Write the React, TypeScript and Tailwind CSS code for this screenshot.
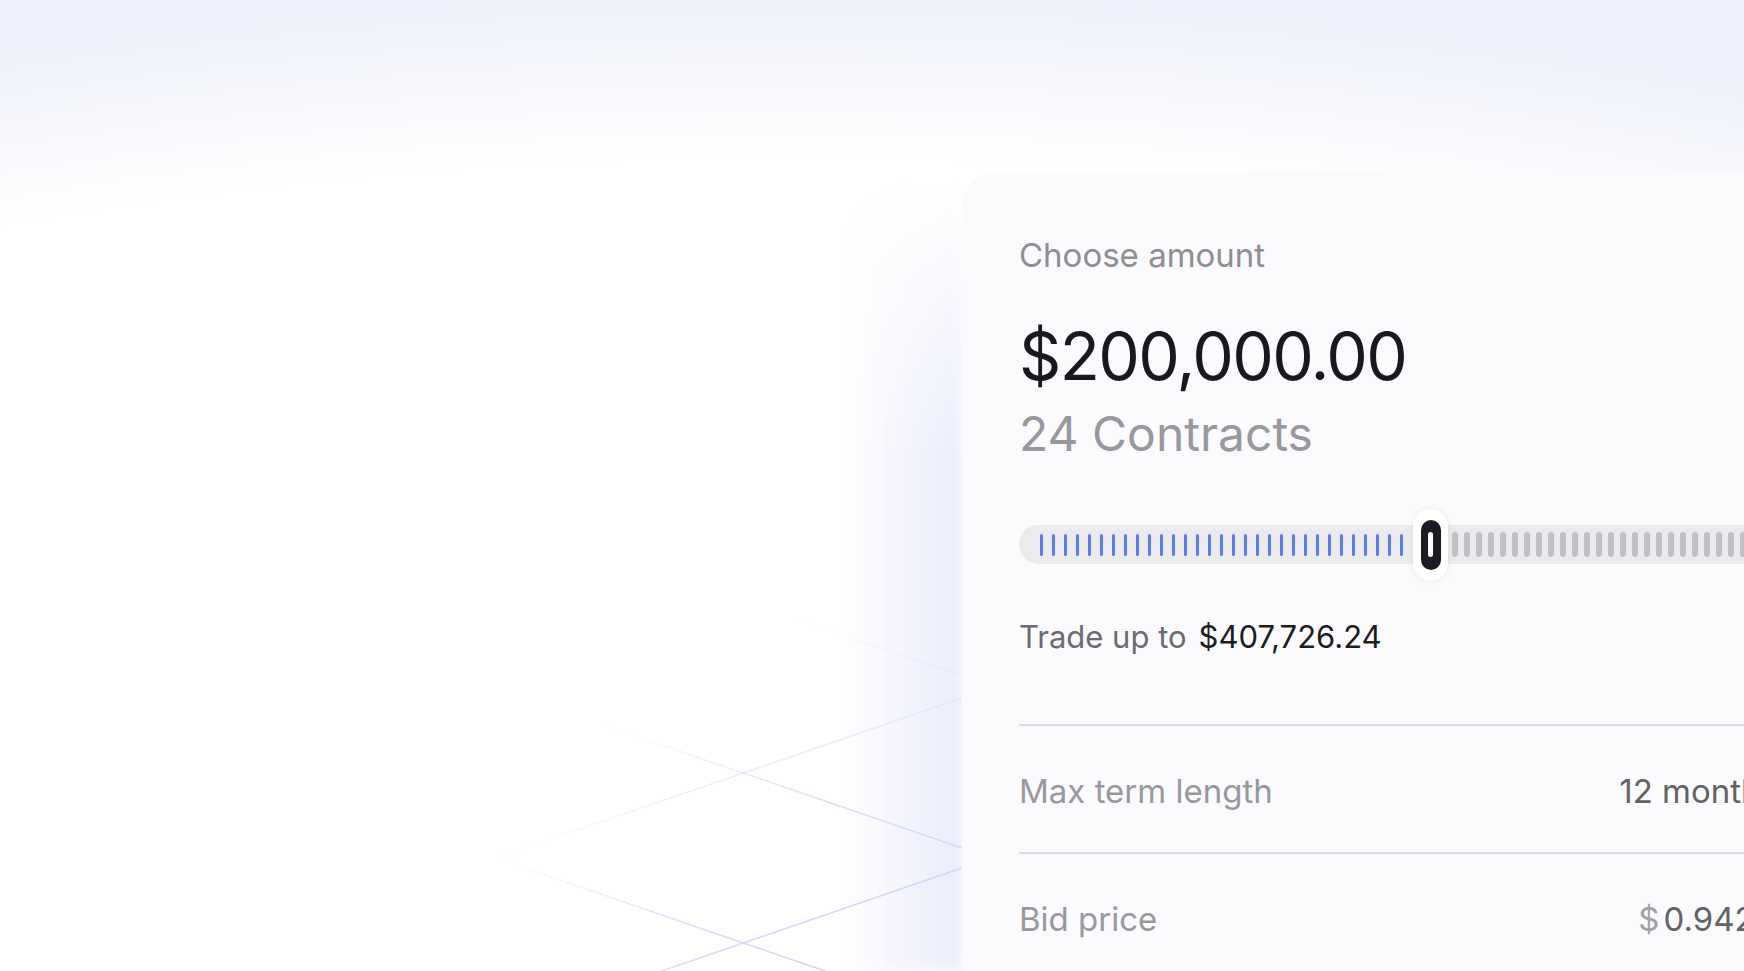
import React from "react";

const blueTicks = Array.from({ length: 31 });
const grayTicks = Array.from({ length: 26 });

// lattice lines behind the card, slope ~0.343
function Lattice() {
  return (
    <svg
      className="absolute left-0 top-0"
      width="962"
      height="971"
      viewBox="0 0 962 971"
      fill="none"
    >
      <defs>
        <radialGradient id="fade" gradientUnits="userSpaceOnUse" cx="920" cy="1080" r="480">
          <stop offset="0" stopColor="#cbc9f7" stopOpacity="1" />
          <stop offset="0.6" stopColor="#d2d0f8" stopOpacity="0.7" />
          <stop offset="1" stopColor="#e0defb" stopOpacity="0" />
        </radialGradient>
      </defs>
      <g stroke="url(#fade)" strokeWidth="1.6">
        <line x1="0" y1="346" x2="962" y2="676" />
        <line x1="0" y1="518" x2="962" y2="848" />
        <line x1="0" y1="688" x2="962" y2="1018" />
        <line x1="0" y1="1028" x2="962" y2="698" />
        <line x1="0" y1="1198" x2="962" y2="868" />
      </g>
    </svg>
  );
}

function Slider() {
  return (
    <div className="flex h-[39px] items-center rounded-full bg-[#ebebee] pl-[21px]">
      <div className="flex gap-[9px]">
        {blueTicks.map((_, i) => (
          <div key={i} className="h-[22px] w-[3px] rounded-full bg-[#5a7ef0]" />
        ))}
      </div>
      <div className="ml-[10px] flex h-[72px] w-[35px] shrink-0 items-center justify-center rounded-full bg-white shadow-[0_0_6px_rgba(0,0,0,0.08)]">
        <div className="flex h-[50px] w-[20px] items-center justify-center rounded-full bg-[#1b1c21]">
          <div className="h-[25px] w-[5px] rounded-full bg-white" />
        </div>
      </div>
      <div className="ml-[4px] flex gap-[6px]">
        {grayTicks.map((_, i) => (
          <div key={i} className="h-[25px] w-[6px] rounded-full bg-[#bfc0c5]" />
        ))}
      </div>
    </div>
  );
}

export default function App() {
  return (
    <div className="relative h-[971px] w-full overflow-hidden bg-[radial-gradient(150%_125%_at_45%_120%,#ffffff_83%,#eef1fb_97%)] font-['Inter','Liberation_Sans',sans-serif]">
      {/* lavender glow left of the card */}
      <div className="absolute left-[840px] top-[180px] h-[791px] w-[123px] rounded-tl-[80px] bg-gradient-to-r from-[#ffffff00] via-[#f4f5fd] to-[#eaecfb] blur-[6px] [mask-image:linear-gradient(to_bottom,transparent,black_280px)]" />
      <Lattice />
      <div className="relative flex pl-[962px] pt-[173px]">
        <div className="h-[798px] w-[870px] shrink-0 rounded-tl-[32px] bg-[#fbfbfd] px-[57px] pt-[66px]">
          <p className="text-[33px] leading-none text-[#8e8e93]">Choose amount</p>
          <p className="mt-[51px] text-[66px] leading-none tracking-[-0.025em] text-[#18191d]">
            $200,000.00
          </p>
          <p className="mt-[21px] text-[48px] leading-none text-[#98989d]">24 Contracts</p>

          <div className="mt-[67px]">
            <Slider />
          </div>

          <div className="mt-[57px] flex items-center gap-[12px] text-[31px] leading-none">
            <span className="text-[#6c6c70]">Trade up to</span>
            <span className="text-[#1c1c1e]">$407,726.24</span>
          </div>

          <div className="mt-[72px] h-[2px] bg-[#dddde1]" />
          <div className="flex items-center justify-between pt-[49px] pb-[44px] text-[33px] leading-none">
            <span className="text-[#98989d]">Max term length</span>
            <span className="mr-[-3px] text-[#636366]">12 months</span>
          </div>
          <div className="h-[2px] bg-[#dddde1]" />
          <div className="flex items-center justify-between pt-[49px] pb-[44px] text-[33px] leading-none">
            <span className="text-[#98989d]">Bid price</span>
            <span className="flex gap-[4px]">
              <span className="text-[#a1a1a6]">$</span>
              <span className="text-[#636366]">0.9423</span>
            </span>
          </div>
        </div>
      </div>
    </div>
  );
}
